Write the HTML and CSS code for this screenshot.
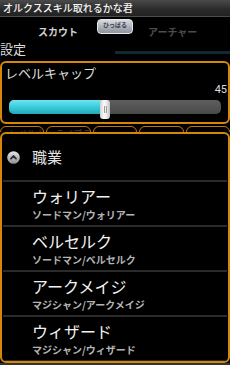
FILE: index.html
```html
<!DOCTYPE html>
<html lang="ja">
<head>
<meta charset="utf-8">
<link rel="stylesheet" href="styles.css">
</head>
<body>
<div class="screen">
  <div class="titlebar">オルクススキル取れるかな君</div>
  <div class="tabs">
    <span class="tab tab-active">スカウト</span>
    <span class="tab tab-next">アーチャー</span>
    <div class="handle">ひっぱる</div>
  </div>
  <div class="section-row">
    <span class="section-label">設定</span>
    <span class="pager-line"></span>
  </div>
  <div class="panel panel-level">
    <div class="panel-title">レベルキャップ</div>
    <div class="level-value">45</div>
    <div class="slider">
      <div class="track"><div class="fill" style="width:45%"></div></div>
      <div class="thumb"><span class="grip"></span><span class="grip"></span></div>
    </div>
  </div>
  <div class="hidden-row">
    <div class="hbox">レベル上限</div>
    <div class="hbox">ライブラリ</div>
    <div class="hbox"></div>
    <div class="hbox"></div>
    <div class="hbox"></div>
  </div>
  <div class="panel panel-list">
    <div class="group-header">
      <span class="group-icon"><svg width="13" height="13" viewBox="0 0 13 13"><defs><linearGradient id="g" x1="0" y1="0" x2="0" y2="1"><stop offset="0" stop-color="#e4e6ea"/><stop offset="1" stop-color="#8d9096"/></linearGradient></defs><circle cx="6.5" cy="6.5" r="6.3" fill="url(#g)"/><path d="M4 7.6 L6.5 5 L9 7.6" fill="none" stroke="#2a2a2a" stroke-width="1.8" stroke-linecap="round" stroke-linejoin="round"/></svg></span>
      <span class="group-label">職業</span>
    </div>
    <div class="item">
      <div class="item-title">ウォリアー</div>
      <div class="item-sub">ソードマン/ウォリアー</div>
    </div>
    <div class="item">
      <div class="item-title">ベルセルク</div>
      <div class="item-sub">ソードマン/ベルセルク</div>
    </div>
    <div class="item">
      <div class="item-title">アークメイジ</div>
      <div class="item-sub">マジシャン/アークメイジ</div>
    </div>
    <div class="item">
      <div class="item-title">ウィザード</div>
      <div class="item-sub">マジシャン/ウィザード</div>
    </div>
  </div>
  <div class="bottom-strip"></div>
</div>
</body>
</html>
```
FILE: styles.css
```css
html, body {
  margin: 0;
  padding: 0;
  background: #000;
}
body {
  font-family: "Noto Sans CJK JP", "Noto Sans", sans-serif;
  color: #e6e6e6;
}
.screen {
  width: 230px;
  height: 365px;
  overflow: hidden;
  display: flex;
  flex-direction: column;
  position: relative;
}
.titlebar {
  height: 16px;
  line-height: 16px;
  font-size: 10px;
  font-weight: 500;
  padding-left: 3px;
  color: #f4f4f4;
  background: linear-gradient(#4a4a4a, #2a2a2a 60%, #222);
  border-bottom: 1px solid #4c4c4c;
  white-space: nowrap;
  flex: none;
}
.tabs {
  position: relative;
  height: 23px;
  padding-top: 8px;
  box-sizing: border-box;
  display: flex;
  flex: none;
}
.tab {
  font-size: 10px;
  line-height: 14px;
  font-weight: 700;
  white-space: nowrap;
}
.tab-active {
  margin-left: 38px;
  color: #cfcfcf;
}
.tab-next {
  margin-left: 70px;
  color: #4c4c4c;
}
.handle {
  position: absolute;
  left: 97px;
  top: 2px;
  width: 36px;
  height: 15px;
  box-sizing: border-box;
  border-radius: 4px;
  border: 1px solid #e6e8ee;
  background: linear-gradient(#d6dae2, #a7acb6 60%, #8e939c);
  color: #3a3c40;
  font-size: 6px;
  line-height: 10px;
  text-align: center;
  font-weight: 700;
}
.section-row {
  height: 21px;
  display: flex;
  flex: none;
}
.section-label {
  font-size: 13px;
  line-height: 15px;
  margin-top: 1px;
  color: #dcdcdc;
}
.pager-line {
  margin-left: auto;
  margin-top: 11px;
  width: 115px;
  height: 3px;
  background: #0e2a34;
}
.panel {
  border: 2px solid #d5870b;
  border-radius: 6px;
  flex: none;
}
.panel-level {
  height: 57px;
  padding: 2px 1px 0 3px;
}
.panel-title {
  font-size: 13px;
  line-height: 16px;
  color: #dedede;
  white-space: nowrap;
}
.level-value {
  margin-top: 2px;
  font-family: Roboto, "Noto Sans", sans-serif;
  font-size: 11px;
  line-height: 13px;
  text-align: right;
  color: #dcdcdc;
}
.slider {
  position: relative;
  margin: 4px 6px 0 4px;
  height: 20px;
}
.track {
  margin-top: 2px;
  height: 14px;
  border-radius: 5px;
  background: linear-gradient(#5e5e5e, #4a4a4a);
  overflow: hidden;
}
.fill {
  height: 100%;
  background: linear-gradient(#6be6f2, #3bcbda 50%, #22a9b8);
}
.thumb {
  position: absolute;
  left: 91px;
  top: 0;
  width: 10px;
  height: 19px;
  box-sizing: border-box;
  border-radius: 3px;
  background: linear-gradient(90deg, #cfcfcf, #fafafa 40%, #e8e8e8 70%, #bdbdbd);
  display: flex;
  justify-content: center;
  align-items: center;
  gap: 1px;
}
.grip {
  width: 1px;
  height: 7px;
  background: #9a9a9a;
}
.hidden-row {
  height: 8px;
  overflow: hidden;
  display: flex;
  gap: 2px;
  flex: none;
}
.hbox {
  flex: 1;
  margin-top: 2px;
  height: 30px;
  border: 1.5px solid #c07a0a;
  border-radius: 6px;
  font-size: 9px;
  line-height: 14px;
  color: #3e3e3e;
  padding-left: 8px;
  white-space: nowrap;
  overflow: hidden;
}
.panel-list {
  height: 227px;
  overflow: hidden;
}
.group-header {
  height: 46px;
  display: flex;
  align-items: center;
  border-bottom: 2px solid #2a2a2a;
  margin: 0 1px;
}
.group-icon {
  width: 13px;
  height: 13px;
  margin-left: 4px;
  display: block;
}
.group-icon svg {
  display: block;
}
.group-label {
  margin-left: 12px;
  font-size: 15px;
  line-height: 18px;
  color: #e2e2e2;
}
.item {
  height: 45px;
  box-sizing: border-box;
  padding: 4px 0 0 29px;
  border-bottom: 2px solid #2a2a2a;
  margin: 0 1px;
}
.item-title {
  font-size: 16px;
  line-height: 20px;
  color: #f2f2f2;
  white-space: nowrap;
}
.item-sub {
  margin-top: 3px;
  font-size: 10px;
  line-height: 12px;
  font-weight: 700;
  color: #b4b4b4;
  white-space: nowrap;
}
.bottom-strip {
  flex: 1;
  background: #333;
}
```
